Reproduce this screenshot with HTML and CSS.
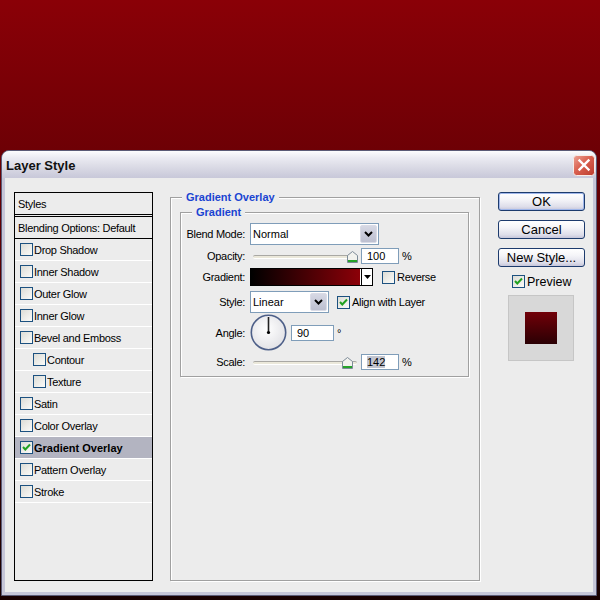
FILE: index.html
```html
<!DOCTYPE html>
<html lang="en">
<head>
    <meta charset="UTF-8">
    <title>Layer Style</title>
    <link rel="stylesheet" href="styles.css">
</head>
<body>
    <div class="dialog">
        <div class="titlebar">
            <span class="title">Layer Style</span>
            <span class="close">
                <svg width="22" height="21" viewBox="0 0 22 21">
                    <defs>
                        <linearGradient id="closeBg" x1="0" y1="0" x2="1" y2="1">
                            <stop offset="0" stop-color="#eda395"/>
                            <stop offset="0.45" stop-color="#d9604f"/>
                            <stop offset="1" stop-color="#bb3b2d"/>
                        </linearGradient>
                    </defs>
                    <rect x="0.5" y="0.5" width="21" height="20" rx="3" fill="url(#closeBg)" stroke="#f6ece8"/>
                    <path d="M6.5 5.5 L15.5 14.5 M15.5 5.5 L6.5 14.5" stroke="#fff" stroke-width="2.4" stroke-linecap="square"/>
                </svg>
            </span>
        </div>

        <div class="client">
            <ul class="styles-list">
                <li class="head">Styles</li>
                <li class="blend">Blending Options: Default</li>
                <li><span class="check"></span>Drop Shadow</li>
                <li><span class="check"></span>Inner Shadow</li>
                <li><span class="check"></span>Outer Glow</li>
                <li><span class="check"></span>Inner Glow</li>
                <li><span class="check"></span>Bevel and Emboss</li>
                <li class="sub"><span class="check"></span>Contour</li>
                <li class="sub"><span class="check"></span>Texture</li>
                <li><span class="check"></span>Satin</li>
                <li><span class="check"></span>Color Overlay</li>
                <li class="selected">
                    <span class="check"><svg width="11" height="11" viewBox="0 0 11 11"><path d="M2 5 L4.3 7.5 L9 2.5" stroke="#21a121" stroke-width="2" fill="none"/></svg></span>Gradient Overlay
                </li>
                <li><span class="check"></span>Pattern Overlay</li>
                <li><span class="check"></span>Stroke</li>
            </ul>

            <div class="group outer">
                <div class="group-title">Gradient Overlay</div>
                <div class="group inner">
                    <div class="group-title">Gradient</div>
                    <div class="form">
                        <div class="row blend-row">
                            <span class="label">Blend Mode:</span>
                            <div class="select wide">
                                <span class="value">Normal</span>
                                <span class="drop"><svg width="9" height="6" viewBox="0 0 9 6"><path d="M1 1 L4.5 4.5 L8 1" stroke="#000" stroke-width="2" fill="none"/></svg></span>
                            </div>
                        </div>

                        <div class="row opacity-row">
                            <span class="label">Opacity:</span>
                            <div class="slider">
                                <div class="track"></div>
                                <svg class="thumb" style="left: 94px" width="11" height="12" viewBox="0 0 11 12">
                                    <path d="M0.5 4.5 L5.5 0.5 L10.5 4.5 V11.5 H0.5 Z" fill="#f2f2ee" stroke="#7d8b98"/>
                                    <rect x="1" y="9" width="9" height="2" fill="#27a32a"/>
                                </svg>
                            </div>
                            <span class="field">100</span>
                            <span class="unit">%</span>
                        </div>

                        <div class="row gradient-row">
                            <span class="label">Gradient:</span>
                            <div class="gradient-picker">
                                <span class="ramp"></span>
                                <span class="ramp-drop"><svg width="7" height="4" viewBox="0 0 7 4"><path d="M0 0 H7 L3.5 4 Z" fill="#000"/></svg></span>
                            </div>
                            <span class="check reverse"></span>
                            <span class="option">Reverse</span>
                        </div>

                        <div class="row style-row">
                            <span class="label">Style:</span>
                            <div class="select narrow">
                                <span class="value">Linear</span>
                                <span class="drop"><svg width="9" height="6" viewBox="0 0 9 6"><path d="M1 1 L4.5 4.5 L8 1" stroke="#000" stroke-width="2" fill="none"/></svg></span>
                            </div>
                            <span class="check align"><svg width="11" height="11" viewBox="0 0 11 11"><path d="M2 5 L4.3 7.5 L9 2.5" stroke="#21a121" stroke-width="2" fill="none"/></svg></span>
                            <span class="option">Align with Layer</span>
                        </div>

                        <div class="row angle-row">
                            <span class="label">Angle:</span>
                            <svg class="dial" width="38" height="38" viewBox="0 0 38 38">
                                <defs>
                                    <radialGradient id="dialBg" cx="0.45" cy="0.4" r="0.6">
                                        <stop offset="0" stop-color="#ffffff"/>
                                        <stop offset="1" stop-color="#e2e2e6"/>
                                    </radialGradient>
                                </defs>
                                <circle cx="18.5" cy="18.5" r="17.2" fill="url(#dialBg)" stroke="#4d5f88" stroke-width="1.6"/>
                                <line x1="18.5" y1="18.5" x2="18.5" y2="3" stroke="#222" stroke-width="1.6"/>
                                <circle cx="18.5" cy="18.5" r="1.6" fill="#000"/>
                            </svg>
                            <span class="field angle">90</span>
                            <span class="unit deg">°</span>
                        </div>

                        <div class="row scale-row">
                            <span class="label">Scale:</span>
                            <div class="slider">
                                <div class="track"></div>
                                <svg class="thumb" style="left: 89px" width="11" height="12" viewBox="0 0 11 12">
                                    <path d="M0.5 4.5 L5.5 0.5 L10.5 4.5 V11.5 H0.5 Z" fill="#f2f2ee" stroke="#7d8b98"/>
                                    <rect x="1" y="9" width="9" height="2" fill="#27a32a"/>
                                </svg>
                            </div>
                            <span class="field"><span class="selection">142</span></span>
                            <span class="unit">%</span>
                        </div>
                    </div>
                </div>
            </div>

            <div class="actions">
                <button class="btn default">OK</button>
                <button class="btn">Cancel</button>
                <button class="btn">New Style...</button>
                <div class="preview-toggle">
                    <span class="check"><svg width="11" height="11" viewBox="0 0 11 11"><path d="M2 5 L4.3 7.5 L9 2.5" stroke="#21a121" stroke-width="2" fill="none"/></svg></span>
                    <span>Preview</span>
                </div>
                <div class="preview">
                    <div class="preview-swatch"></div>
                </div>
            </div>
        </div>
    </div>
</body>
</html>
```

FILE: styles.css
```css
html {
    background: linear-gradient(#8a0007, #180000);
    min-height: 600px;
}
body {
    margin: 0;
    padding-top: 150px;
    font-family: "Liberation Sans", Arial, sans-serif;
    font-size: 11px;
    color: #000;
}

/* window frame */
.dialog {
    width: 596px;
    margin-left: 1px;
    box-sizing: border-box;
    background: #c6c6d8;
    border: 1px solid #5b5b76;
    border-radius: 8px 8px 0 0;
}
.titlebar {
    height: 27px;
    display: flex;
    align-items: center;
    justify-content: space-between;
    padding: 0 1px 0 4px;
    border-radius: 7px 7px 0 0;
    background: linear-gradient(#fdfdfe 0%, #ebebf2 25%, #dadae5 60%, #c8c8d9 100%);
}
.title {
    font-size: 13px;
    font-weight: bold;
    color: #111;
    margin-top: 2px;
}
.close {
    display: flex;
    margin-top: 1px;
}
.client {
    height: 414px;
    margin: 0 3px 3px;
    background: #ececec;
    display: flex;
    align-items: flex-start;
}

/* left styles list */
.styles-list {
    list-style: none;
    margin: 14px 0 0 9px;
    padding: 0;
    width: 139px;
    height: 389px;
    box-sizing: border-box;
    border: 1px solid #000;
    letter-spacing: -0.3px;
}
.styles-list li {
    height: 21px;
    display: flex;
    align-items: center;
    padding-left: 5px;
    border-bottom: 1px solid #fff;
    white-space: nowrap;
}
.styles-list li.head {
    padding-left: 3px;
    border-bottom: 3px double #000;
}
.styles-list li.blend {
    padding-left: 3px;
    border-bottom: 1px solid #000;
}
.styles-list li.sub {
    padding-left: 18px;
}
.styles-list li.selected {
    background: #b3b4c1;
    font-weight: bold;
    letter-spacing: 0;
}
.styles-list .check {
    margin-right: 1px;
}

.check {
    width: 13px;
    height: 13px;
    box-sizing: border-box;
    border: 1px solid #1c5180;
    background: linear-gradient(135deg, #dcdcd6, #fbfbf9);
    display: inline-flex;
    align-items: center;
    justify-content: center;
    flex-shrink: 0;
}

/* group boxes */
.group {
    box-sizing: border-box;
    border: 1px solid #a0a0a0;
    box-shadow: inset 1px 1px 0 #fff, 1px 1px 0 #fff;
}
.group-title {
    width: fit-content;
    height: 13px;
    line-height: 13px;
    margin: -7px 0 0 11px;
    padding: 0 4px;
    background: #ececec;
    color: #1a44d2;
    font-weight: bold;
}
.outer {
    width: 310px;
    height: 384px;
    margin: 19px 0 0 17px;
    padding-left: 9px;
}
.outer > .group-title {
    margin-left: 2px;
}
.inner {
    width: 289px;
    margin-top: 8px;
    padding-bottom: 6px;
}

/* form rows */
.form {
    margin-top: 4px;
}
.row {
    display: flex;
    align-items: center;
}
.label {
    width: 64px;
    margin-right: 5px;
    text-align: right;
    letter-spacing: -0.3px;
    white-space: nowrap;
}
.blend-row { height: 22px; }
.opacity-row { height: 16px; margin-top: 3px; }
.gradient-row { height: 18px; margin-top: 4px; }
.style-row { height: 22px; margin-top: 5px; }
.angle-row { height: 37px; margin-top: 1px; }
.scale-row { height: 16px; margin-top: 3px; }

.select {
    height: 22px;
    box-sizing: border-box;
    display: flex;
    align-items: stretch;
    border: 1px solid #7f9db9;
    background: #fff;
}
.select.wide { width: 129px; }
.select.narrow { width: 79px; }
.select .value {
    flex: 1;
    padding-left: 2px;
    display: flex;
    align-items: center;
}
.select .drop {
    width: 17px;
    margin: 1px;
    box-sizing: border-box;
    display: flex;
    align-items: center;
    justify-content: center;
    border: 1px solid #d9dbe6;
    border-radius: 2px;
    background: linear-gradient(#d6d8e4, #bcbfd0);
}

.slider {
    position: relative;
    width: 104px;
    height: 16px;
    margin-left: 3px;
}
.track {
    width: 100%;
    height: 2px;
    margin-top: 7px;
    border-top: 1px solid #a9a8a4;
    border-bottom: 1px solid #fff;
    border-radius: 2px;
    background: #ebe8da;
}
.thumb {
    position: absolute;
    top: 3px;
}

.field {
    width: 38px;
    height: 16px;
    box-sizing: border-box;
    margin-left: 4px;
    padding-left: 5px;
    border: 1px solid #7f9db9;
    background: #fff;
    line-height: 14px;
}
.field.angle {
    width: 43px;
    margin-left: 3px;
}
.selection {
    background: #c2c5d0;
}
.unit {
    margin-left: 3px;
}

.gradient-picker {
    width: 123px;
    height: 18px;
    box-sizing: border-box;
    display: flex;
    border: 1px solid #000;
    background: #fff;
}
.ramp {
    flex: 1;
    border-right: 1px solid #fff;
    background: linear-gradient(to right, #000, #8c0008);
}
.ramp-drop {
    width: 10px;
    display: flex;
    align-items: center;
    justify-content: center;
    border-left: 1px solid #000;
}
.check.reverse {
    margin-left: 9px;
}
.check.align {
    margin-left: 8px;
}
.option {
    margin-left: 2px;
    letter-spacing: -0.3px;
    white-space: nowrap;
}
.dial {
    display: block;
}

/* right column */
.actions {
    width: 87px;
    margin: 14px 0 0 18px;
}
.btn {
    display: block;
    width: 87px;
    height: 19px;
    margin: 0 0 9px;
    padding: 0;
    box-sizing: border-box;
    border: 1px solid #1d3b6d;
    border-radius: 3px;
    background: linear-gradient(#ffffff, #f4f4f8 40%, #dedeea 80%, #c6c6da);
    font-family: "Liberation Sans", Arial, sans-serif;
    font-size: 13px;
    line-height: 16px;
    color: #000;
}
.btn.default {
    box-shadow: inset 0 0 0 1px #9fb6ea;
}
.preview-toggle {
    display: flex;
    align-items: center;
    height: 13px;
    margin: -1px 0 0 14px;
    font-size: 12.5px;
}
.preview-toggle .check {
    margin-right: 2px;
}
.preview {
    width: 66px;
    height: 66px;
    box-sizing: border-box;
    margin: 7px 0 0 10px;
    padding: 16px;
    border: 1px solid #c6c6c6;
    background: #d8d8d8;
}
.preview-swatch {
    width: 32px;
    height: 32px;
    background: linear-gradient(#710008, #2a0004);
}
```
